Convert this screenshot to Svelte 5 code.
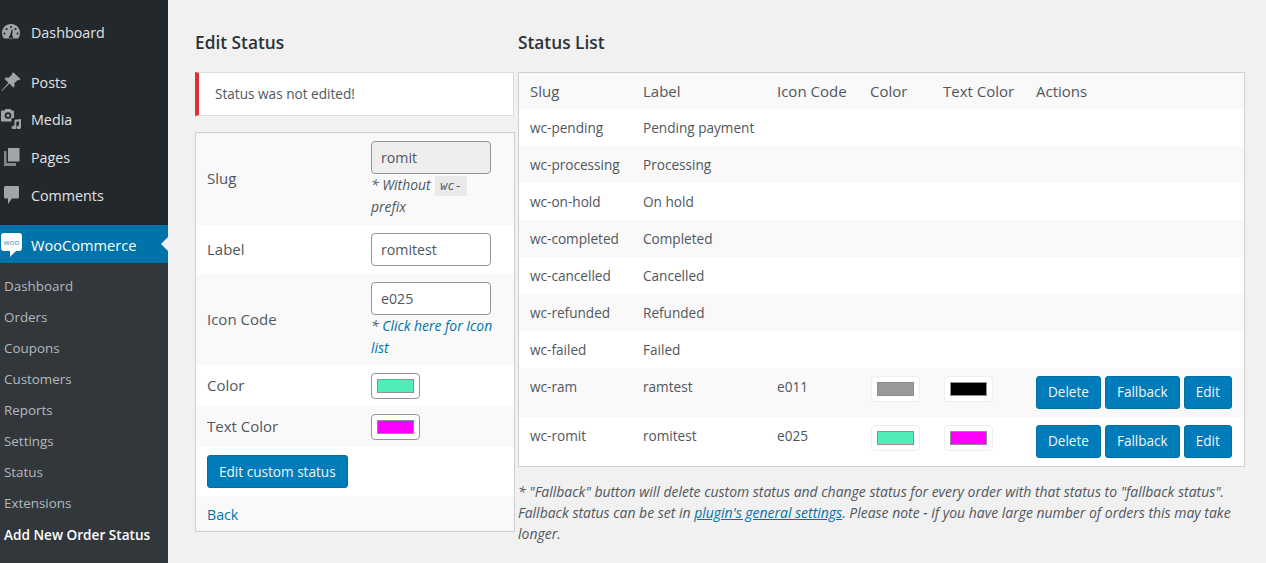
<script>
  const submenu = ['Dashboard','Orders','Coupons','Customers','Reports','Settings','Status','Extensions'];
  const rows = [
    ['wc-pending','Pending payment'],
    ['wc-processing','Processing'],
    ['wc-on-hold','On hold'],
    ['wc-completed','Completed'],
    ['wc-cancelled','Cancelled'],
    ['wc-refunded','Refunded'],
    ['wc-failed','Failed']
  ];
  const custom = [
    { slug:'wc-ram', label:'ramtest', code:'e011', color:'#999999', text:'#000000' },
    { slug:'wc-romit', label:'romitest', code:'e025', color:'#4eedb9', text:'#ff00ff' }
  ];
</script>

<div class="page">
  <aside class="side">
    <a class="item first">
      <svg viewBox="0 0 20 18" class="ic gauge"><path d="M10 1C4.800 1 1 5 1 9.800c0 2.300.8 4.200 2 5.700h14c1.200-1.500 2-3.400 2-5.700C19 5 15.200 1 10 1zM10 3a1.100 1.100 0 1 1 0 2.200A1.100 1.100 0 0 1 10 3zM5.500 5a1.100 1.100 0 1 1 0 2.200A1.100 1.100 0 0 1 5.500 5zm9 0a1.100 1.100 0 1 1 0 2.200 1.100 1.100 0 0 1 0-2.200zM3.500 9.500a1.100 1.100 0 1 1 0 2.200 1.100 1.100 0 0 1 0-2.200zm13 0a1.100 1.100 0 1 1 0 2.200 1.100 1.100 0 0 1 0-2.200zM11.800 6.500l-.7 6a2 2 0 1 1-2.200 0l2-6z" fill-rule="evenodd"/></svg>
      <span>Dashboard</span>
    </a>
    <a class="item">
      <svg viewBox="0 0 20 20" class="ic"><path d="M12.500 0.500l7 6.500-1.300 1.300-1.300-.4-3.600 3.400c.5 1.700.2 3.300-.8 4.400L8.400 11.600 1 19l-.5-.5 6.900-7.800-4.100-4.200c1.100-1 2.800-1.300 4.500-.8l3.500-3.500-.4-1.300z"/></svg>
      <span>Posts</span>
    </a>
    <a class="item">
      <svg viewBox="0 0 20 20" class="ic"><path fill-rule="evenodd" d="M1 1.500h2.500l1-1.500h5l1 1.500h1.500c.6 0 1 .4 1 1V9h-2.500v3.500H1c-.6 0-1-.4-1-1v-9c0-.6.4-1 1-1zM7 3.200a3.300 3.300 0 1 0 0 6.600 3.300 3.300 0 0 0 0-6.600zm0 1.800a1.500 1.500 0 1 1 0 3 1.500 1.500 0 0 1 0-3z"/><path d="M13.500 10.700l6.500-.7v8.300a2.200 1.900 0 1 1-2-1.900v-4l-2.700.4v5.700a2.300 2 0 1 1-1.800-2z"/></svg>
      <span>Media</span>
    </a>
    <a class="item">
      <svg viewBox="0 0 20 20" class="ic"><path d="M7 1h11.500v13.500H7z"/><path d="M5.500 4H3v15h12v-3H5.500z" opacity=".75"/></svg>
      <span>Pages</span>
    </a>
    <a class="item">
      <svg viewBox="0 0 20 20" class="ic"><path d="M4.500 1h12c1 0 1.500.7 1.500 1.500v9.500c0 .8-.5 1.500-1.500 1.500H11L7 19v-5.500H4.500C3.500 13.500 3 12.800 3 12V2.500C3 1.700 3.500 1 4.500 1z"/></svg>
      <span>Comments</span>
    </a>
    <a class="item active">
      <span class="woo">woo</span>
      <span>WooCommerce</span>
      <i class="arrow"></i>
    </a>
    <nav class="sub">
      {#each submenu as s}
        <a class="subitem">{s}</a>
      {/each}
      <a class="subitem current">Add New Order Status</a>
    </nav>
  </aside>

  <main class="main">
    <section class="left">
      <h2>Edit Status</h2>
      <div class="notice">Status was not edited!</div>
      <table class="form">
        <tbody>
          <tr class="alt slugrow">
            <th>Slug</th>
            <td>
              <input class="txt" disabled value="romit" />
              <p class="hint">* Without <code>wc-</code> prefix</p>
            </td>
          </tr>
          <tr class="labelrow">
            <th>Label</th>
            <td><input class="txt" value="romitest" /></td>
          </tr>
          <tr class="alt iconrow">
            <th>Icon Code</th>
            <td>
              <input class="txt" value="e025" />
              <p class="hint">* <a class="link">Click here for Icon list</a></p>
            </td>
          </tr>
          <tr class="colorrow">
            <th>Color</th>
            <td><input class="col" type="color" value="#4eedb9" /></td>
          </tr>
          <tr class="alt colorrow">
            <th>Text Color</th>
            <td><input class="col" type="color" value="#ff00ff" /></td>
          </tr>
          <tr class="btnrow">
            <td colspan="2"><button class="btn">Edit custom status</button></td>
          </tr>
          <tr class="alt backrow">
            <td colspan="2"><a class="link">Back</a></td>
          </tr>
        </tbody>
      </table>
    </section>

    <section class="right">
      <h2>Status List</h2>
      <table class="list">
        <colgroup>
          <col class="c1" /><col class="c2" /><col class="c3" /><col class="c4" /><col class="c5" /><col class="c6" />
        </colgroup>
        <thead>
          <tr>
            <th>Slug</th><th>Label</th><th>Icon Code</th><th>Color</th><th>Text Color</th><th>Actions</th>
          </tr>
        </thead>
        <tbody>
          {#each rows as r}
            <tr>
              <td>{r[0]}</td><td>{r[1]}</td><td></td><td></td><td></td><td></td>
            </tr>
          {/each}
          {#each custom as c}
            <tr class="big">
              <td>{c.slug}</td>
              <td>{c.label}</td>
              <td>{c.code}</td>
              <td><input class="col off" type="color" disabled value={c.color} /></td>
              <td><input class="col off" type="color" disabled value={c.text} /></td>
              <td class="acts">
                <button class="btn">Delete</button>
                <button class="btn">Fallback</button>
                <button class="btn">Edit</button>
              </td>
            </tr>
          {/each}
        </tbody>
      </table>
      <p class="note">* "Fallback" button will delete custom status and change status for every order with that status to "fallback status". Fallback status can be set in <a class="link under">plugin's general settings</a>. Please note - if you have large number of orders this may take longer.</p>
    </section>
  </main>
</div>

<style>
  :global(body) {
    margin: 0;
    background: #f1f1f1;
    font-family: "Open Sans", "Noto Sans", sans-serif;
    font-size: 13.6px;
    color: #50575e;
  }
  .page {
    display: flex;
    height: 563px;
    overflow: hidden;
  }
  .side {
    width: 168px;
    flex: none;
    background: #23282d;
    padding-top: 13px;
    color: #eee;
    display: flex;
    flex-direction: column;
  }
  .item {
    position: relative;
    display: flex;
    align-items: center;
    box-sizing: border-box;
    height: 37.7px;
    padding-top: 1px;
    font-size: 14.3px;
    color: #e0e2e3;
  }
  .item span:not(.woo) {
    margin-left: 31px;
  }
  .item.first { margin-bottom: 12px; }
  .ic {
    position: absolute;
    left: 1px;
    top: 9px;
    width: 20px;
    height: 20px;
    fill: #a0a5aa;
  }
  .active {
    margin-top: 12px;
    height: 38px;
    background: #0073aa;
    color: #fff;
    font-size: 14.6px;
  }
  .woo {
    position: absolute;
    left: 1px;
    top: 8px;
    width: 21px;
    height: 18px;
    border-radius: 3px;
    background: #fff;
    color: #3d8fc0;
    font-size: 8px;
    line-height: 17px;
    text-align: center;
  }
  .woo::after {
    content: "";
    position: absolute;
    left: 9px;
    top: 18px;
    border: 3px solid transparent;
    border-top-color: #fff;
    border-left-color: #fff;
  }
  .arrow {
    position: absolute;
    right: 0;
    top: 12px;
    border: 7px solid transparent;
    border-right-color: #f1f1f1;
    border-left: 0;
  }
  .sub {
    flex: 1;
    background: #32373c;
    padding-top: 7.500px;
    display: flex;
    flex-direction: column;
  }
  .subitem {
    height: 31.05px;
    line-height: 31px;
    padding-left: 4px;
    font-size: 13.4px;
    color: #b4b9be;
    flex: none;
  }
  .current {
    color: #fff;
    font-weight: 600;
    font-size: 13.6px;
  }
  .main {
    display: flex;
    gap: 3px;
    padding-left: 27px;
    align-items: flex-start;
  }
  .left { width: 320px; }
  .right { width: 727px; }
  h2 {
    margin: 30px 0 17px;
    font-size: 17.3px;
    line-height: 25px;
    font-weight: 600;
    color: #2c3338;
  }
  .notice {
    box-sizing: border-box;
    height: 44px;
    width: 319px;
    background: #fff;
    border: 1px solid #dcdcde;
    border-left: 4px solid #dc3232;
    padding-left: 16px;
    line-height: 42px;
  }
  table {
    border-collapse: separate;
    border-spacing: 0;
    background: #fff;
    border: 1px solid #ccd0d4;
  }
  .form {
    width: 320px;
    margin-top: 16px;
    table-layout: fixed;
  }
  .form th {
    width: 164px;
    padding: 0 0 2px 11px;
    text-align: left;
    font-weight: 500;
    font-size: 15px;
  }
  .form td {
    padding: 8px 0;
    vertical-align: top;
  }
  .alt { background: #f9f9f9; }
  .txt {
    display: block;
    box-sizing: border-box;
    width: 120px;
    height: 33px;
    padding: 0 9px;
    border: 1px solid #8d96a0;
    border-radius: 4px;
    background: #fff;
    font: inherit;
    font-size: 14.2px;
    color: #50575e;
    margin: 0;
  }
  .txt:disabled {
    background: #eee;
    color: #50575e;
  }
  .hint {
    margin: 0;
    width: 124px;
    line-height: 21.5px;
    font-style: italic;
    font-size: 13.9px;
  }
  .iconrow td { padding-bottom: 7px; }
  .hint code {
    font-family: "DejaVu Sans Mono", monospace;
    font-size: 12px;
    line-height: 1;
    background: #eaeaea;
    padding: 3px 5px;
    margin-left: 1px;
  }
  .link { color: #0073aa; }
  .under { text-decoration: underline; }
  .colorrow td { padding: 8px 0 7px; }
  .col {
    display: block;
    box-sizing: border-box;
    width: 49px;
    height: 26px;
    padding: 0 5px;
    margin: 0;
    border: 1px solid #8d96a0;
    border-radius: 4px;
    background: #fff;
  }
  .col::-webkit-color-swatch-wrapper { padding: 5px 0; }
  .col::-webkit-color-swatch { border: 1px solid #8c8f94; border-radius: 0; }
  .col.off { border-color: #eee; }
  .form .btnrow td { padding: 8px 0 8px 11px; }
  .form .backrow td { padding: 9px 0 7px 11px; font-size: 14.2px; }
  .btn {
    box-sizing: border-box;
    height: 33px;
    padding: 0 11px;
    margin: 0;
    border: 1px solid #0071a1;
    border-radius: 3px;
    background: #007cba;
    color: #f3f5f6;
    font: inherit;
    font-size: 13.6px;
    vertical-align: top;
  }
  .list {
    width: 727px;
    table-layout: fixed;
  }
  .c1 { width: 113px; }
  .c2 { width: 134px; }
  .c3 { width: 93px; }
  .c4 { width: 73px; }
  .c5 { width: 93px; }
  .list th {
    height: 35.500px;
    padding: 0 0 0 11px;
    text-align: left;
    font-weight: 500;
    font-size: 15px;
    background: #f9f9f9;
  }
  .list td {
    height: 37px;
    padding: 0 0 0 11px;
    white-space: nowrap;
  }
  .list tbody tr:nth-child(even) td { background: #f9f9f9; }
  .list tr.big td {
    height: 49px;
    box-sizing: border-box;
    padding-top: 8px;
    vertical-align: top;
    line-height: 21px;
  }
  .list tr.big .col { margin-left: 1px; }
  .acts {
    font-size: 0;
  }
  .acts .btn {
    margin-right: 4px;
    font-size: 13.55px;
  }
  .note {
    margin: 14px 0 0;
    font-style: italic;
    font-size: 13.97px;
    line-height: 21px;
  }
</style>
